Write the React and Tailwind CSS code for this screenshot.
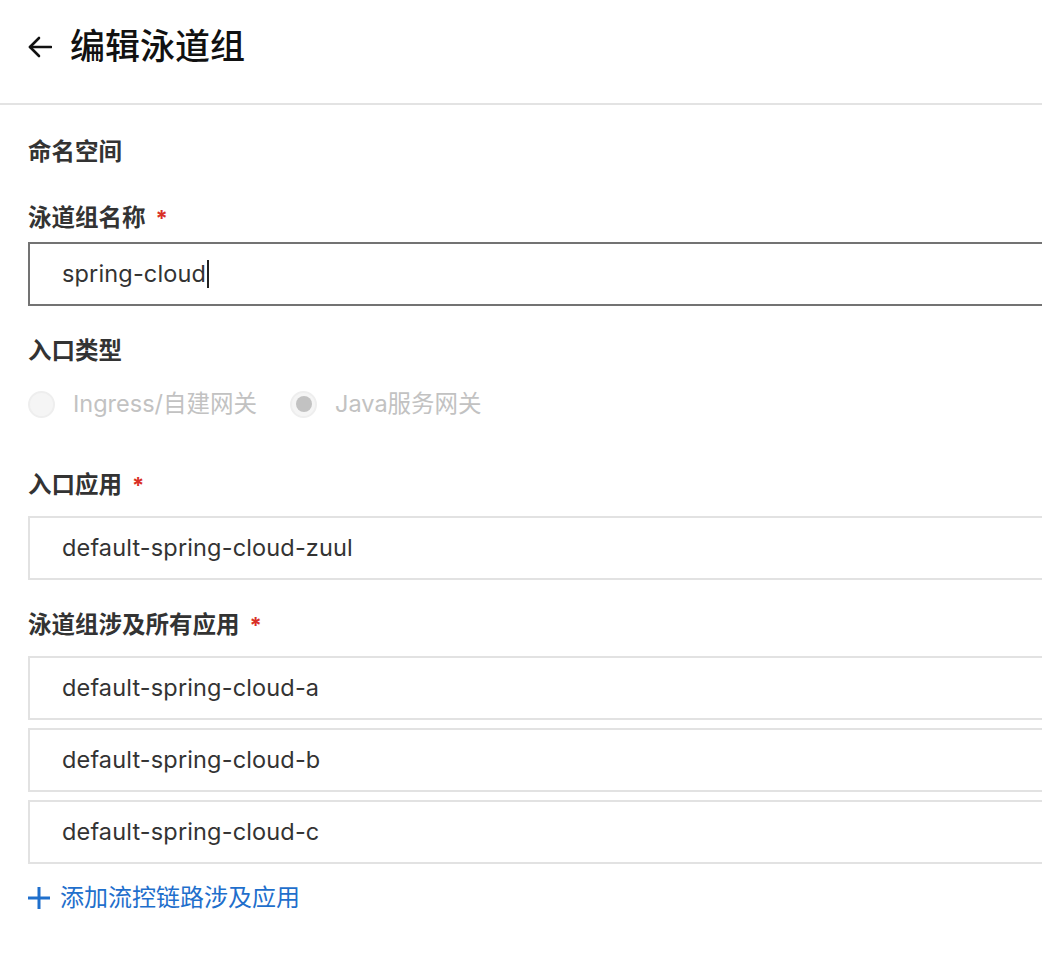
const font = { fontFamily: '"Inter", "Noto Sans CJK SC", sans-serif' };

const apps = ["default-spring-cloud-a", "default-spring-cloud-b", "default-spring-cloud-c"];

const Label = ({ children, required, className = "" }) => (
  <div className={`flex h-8 items-center text-[23.5px] font-semibold text-[#333333] ${className}`}>
    {children}
    {required && <span className="ml-[10px] text-[22px] font-bold text-[#d93026]">*</span>}
  </div>
);

const Field = ({ value, focused, className = "" }) => (
  <div
    className={`-mr-6 flex h-16 items-center border-2 bg-white pl-[32px] text-[23.5px] tracking-[0.15px] text-[#333333] ${
      focused ? "border-[#737373]" : "border-[#e2e2e2]"
    } ${className}`}
  >
    {value}
    {focused && <span className="ml-px h-7 w-[2px] bg-[#222222]" />}
  </div>
);

const Radio = ({ label, checked }) => (
  <div className="flex items-center gap-[18px]">
    <span className="flex h-[27px] w-[27px] items-center justify-center rounded-full border-2 border-[#eeeeee] bg-[#f5f5f5]">
      {checked && <span className="h-4 w-4 rounded-full bg-[#c2c2c2]" />}
    </span>
    <span className="text-[23.5px] text-[#c2c2c2]">{label}</span>
  </div>
);

export default function App() {
  return (
    <div className="min-h-screen overflow-hidden bg-white" style={font}>
      <div className="flex h-[103px] items-center gap-[18px] pl-7 pb-[10px]">
        <svg width="24" height="22" viewBox="0 0 24 22" fill="none" stroke="#111111" strokeWidth="2.6" strokeLinecap="round" strokeLinejoin="round">
          <path d="M23 11H2" />
          <path d="M11 2L2 11l9 9" />
        </svg>
        <h1 className="text-[35px] font-medium text-[#111111]">编辑泳道组</h1>
      </div>
      <div className="h-[2px] bg-[#e3e3e3]" />

      <div className="flex flex-col pl-7">
        <Label className="mt-[31px]">命名空间</Label>
        <Label className="mt-[34px]" required>
          泳道组名称
        </Label>
        <Field className="mt-[8px]" value="spring-cloud" focused />

        <Label className="mt-[29px]">入口类型</Label>
        <div className="mt-[21px] flex h-8 items-center gap-[33px]">
          <Radio label="Ingress/自建网关" />
          <Radio label="Java服务网关" checked />
        </div>

        <Label className="mt-[49px]" required>
          入口应用
        </Label>
        <Field className="mt-[15px]" value="default-spring-cloud-zuul" />

        <Label className="mt-[29px]" required>
          泳道组涉及所有应用
        </Label>
        <div className="mt-[15px] flex flex-col gap-2">
          {apps.map((a) => (
            <Field key={a} value={a} />
          ))}
        </div>

        <button className="mt-[18px] flex h-8 items-center gap-[10px] text-[24px] text-[#1f6fcc]">
          <svg width="22" height="22" viewBox="0 0 22 22" fill="none" stroke="#1f6fcc" strokeWidth="3">
            <path d="M11 0v22" />
            <path d="M0 11h22" />
          </svg>
          添加流控链路涉及应用
        </button>
      </div>
    </div>
  );
}
